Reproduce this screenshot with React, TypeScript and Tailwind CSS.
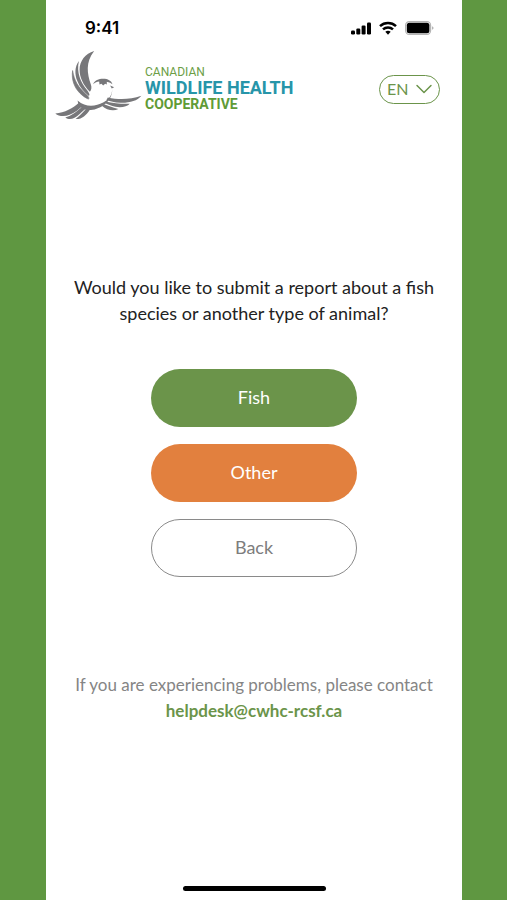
import { ChevronDown } from "lucide-react";

function StatusBar() {
    return (
        <div className="flex h-14 items-center justify-between pl-[39px] pr-7">
            <span className="font-['Inter',sans-serif] text-[17px] font-semibold leading-6 text-black">9:41</span>
            <div className="flex items-center gap-2">
                <svg className="h-[14px] w-5" viewBox="0 0 20 14" aria-hidden="true">
                    <rect x="0" y="9.5" width="4" height="4" rx="1.2" />
                    <rect x="5.3" y="7.5" width="4" height="6" rx="1.2" />
                    <rect x="10.6" y="4.5" width="4" height="9" rx="1.2" />
                    <rect x="16" y="1.5" width="4" height="12" rx="1.2" />
                </svg>
                <svg className="h-[14px] w-[18px]" viewBox="0 0 18 14" fill="none" stroke="#000" strokeWidth="2.5" aria-hidden="true">
                    <path d="M1 5.1C5.5.9 12.5.9 17 5.1" />
                    <path d="M4 8.4C6.8 5.8 11.2 5.8 14 8.4" />
                    <path d="M6.3 10.8Q9 8.6 11.7 10.8L9 13.8Z" fill="#000" stroke="none" />
                </svg>
                <svg className="h-[14px] w-[29px]" viewBox="0 0 29 14" aria-hidden="true">
                    <rect x="0.6" y="0.6" width="25" height="12.8" rx="3.6" fill="#fff" stroke="#b5b5b5" strokeWidth="1.2" />
                    <rect x="1.8" y="1.8" width="22.6" height="10.4" rx="2.5" fill="#000" />
                    <path d="M27 5.2Q28.6 5.8 28.6 7T27 8.8Z" fill="#b5b5b5" />
                </svg>
            </div>
        </div>
    )
}

function Bird() {
    return (
        <svg className="h-[71px] w-[87px] shrink-0" viewBox="28 30 262 212" fill="#77777a" aria-hidden="true">
            {/* raised wing */}
            <path d="M146 32C119 39 102 63 102 88C102 112 113 135 133 155C138 149 139 141 136 133C125 100 119 66 146 32Z" />
            <path d="M100 62C87 79 87 102 95 122C102 141 114 154 129 167C134 167 132 160 126 152C105 126 92 97 100 62Z" />
            <path d="M81 91C77 118 86 142 103 159C112 168 121 174 129 177C132 172 126 166 119 160C98 141 86 122 81 91Z" stroke="#77777a" strokeWidth="2" />
            {/* head */}
            <path d="M143 132C147 121 160 116 173 116C187 116 198 122 201 132L194 128L184 125L184 133L179 131L173 136L168 131L162 133L161 124C154 125 149 127 143 132Z" />
            <path d="M194 136L206 141L199 145Z" />
            {/* body */}
            <path d="M200 146C201 164 191 179 173 187C150 199 121 203 96 181C98 202 116 211 136 210C166 208 203 182 200 146Z" />
            {/* right wing */}
            <path d="M187 172C222 180 255 178 288 167C275 183 252 189 224 188C207 188 195 184 183 180Z" />
            <path d="M180 184C205 190 230 192 253 191C246 200 227 203 210 200C197 198 187 193 177 189Z" />
            <path d="M174 192C190 198 204 203 219 207C203 215 184 210 169 197Z" />
            {/* tail */}
            <path d="M101 187C83 204 57 218 29 220C39 229 57 230 72 224C88 218 99 209 111 198Z" />
            <path d="M110 200C93 214 76 229 59 232C71 241 86 236 96 227C106 218 114 211 121 205Z" />
            <path d="M122 206C112 216 101 229 90 237C107 239 122 226 133 209Z" />
        </svg>
    )
}

function Header() {
    return (
        <header className="flex items-start justify-between pl-[9px] pr-[22px]">
            <div className="-mt-1.5 flex">
                <Bird />
                <div className="flex flex-col whitespace-nowrap pl-[3px] pt-[14px] font-['Roboto',sans-serif] leading-4">
                    <span className="text-[12px] text-[#6c9e46]">CANADIAN</span>
                    <span className="text-[18px] font-bold text-[#2795a9]">WILDLIFE HEALTH</span>
                    <span className="text-[14px] font-bold text-[#609b36]">COOPERATIVE</span>
                </div>
            </div>
            <div className="relative mt-[19px] flex">
                <select aria-label="Language" className="h-[29px] w-[61px] appearance-none rounded-full border border-[#6b944a] bg-white pb-0.5 pl-[7px] text-[16px] leading-6 text-[#6b944a]">
                    <option>EN</option>
                    <option>FR</option>
                </select>
                <ChevronDown className="pointer-events-none absolute right-0.5 top-0 h-7 w-7 text-[#6b944a]" strokeWidth={1.25} />
            </div>
        </header>
    )
}

export default function App() {
    return (
        <div className="min-h-screen bg-[#5f9741] pl-[46px] pr-[45px] font-['Lato','Open_Sans',sans-serif]">
            <div className="flex min-h-screen flex-col bg-white">
                <StatusBar />
                <Header />
                <main className="flex flex-col items-center px-4 pt-[153px] text-center">
                    <h1 className="text-[18px] leading-[26px] text-[#222]">
                        Would you like to submit a report about a fish species or another type of animal?
                    </h1>
                    <div className="mt-[43px] flex w-[206px] flex-col gap-[17px] text-[18px] leading-6">
                        <button className="h-[58px] rounded-full bg-[#6b944a] pb-[3px] text-white">Fish</button>
                        <button className="h-[58px] rounded-full bg-[#e2803e] pb-[3px] text-white">Other</button>
                        <button className="h-[58px] rounded-full border border-[#8a8a8a] bg-white pb-[3px] text-[#7d7d7d]">Back</button>
                    </div>
                    <p className="mt-[95px] text-[17px] leading-[26px] text-[#858585]">
                        If you are experiencing problems, please contact
                        <a className="block font-bold text-[#6b944a]" href="mailto:helpdesk@cwhc-rcsf.ca">helpdesk@cwhc-rcsf.ca</a>
                    </p>
                </main>
                <div className="mx-auto mb-[9px] mt-auto h-[5px] w-[143px] rounded-full bg-black"></div>
            </div>
        </div>
    )
}
